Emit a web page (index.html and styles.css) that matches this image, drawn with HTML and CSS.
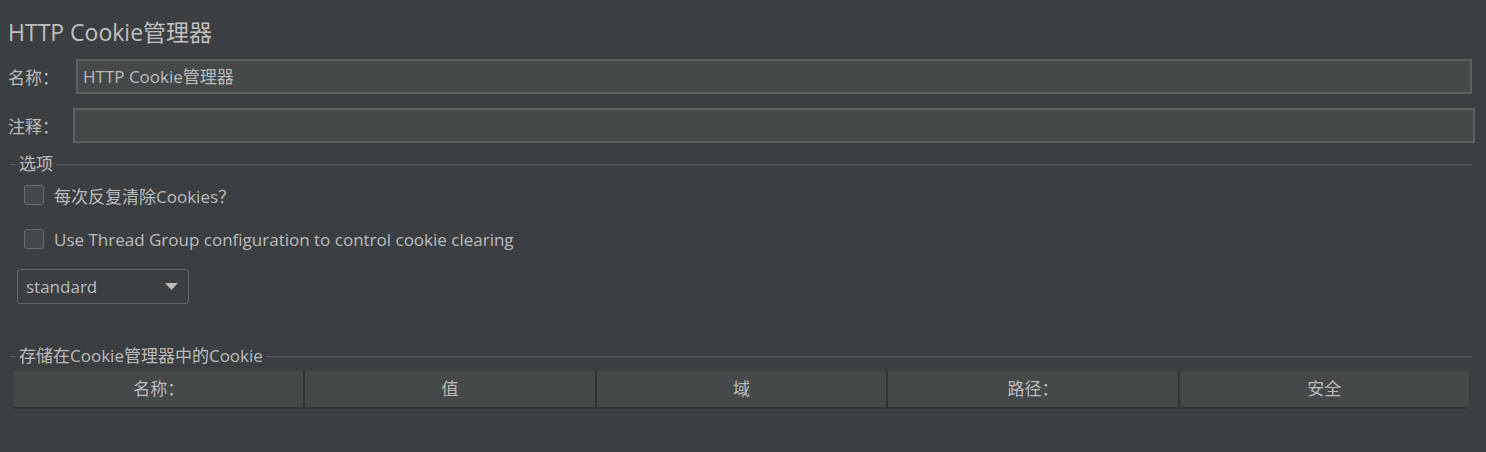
FILE: index.html
```html
<!DOCTYPE html>
<html lang="zh">
<head>
<meta charset="utf-8">
<title>HTTP Cookie管理器</title>
<link rel="stylesheet" href="styles.css">
</head>
<body>
<div class="panel">
  <div class="title">HTTP Cookie管理器</div>
  <div class="row row-name">
    <label class="label label-name">名称：</label>
    <div class="field">HTTP Cookie管理器</div>
  </div>
  <div class="row row-comment">
    <label class="label label-comment">注释：</label>
    <div class="field"></div>
  </div>

  <div class="group group-options">
    <div class="legend"><span class="dash"></span><span class="legend-text">选项</span><span class="rule"></span></div>
    <div class="check-row first"><span class="checkbox"></span><span class="check-text">每次反复清除Cookies？</span></div>
    <div class="check-row"><span class="checkbox"></span><span class="check-text">Use Thread Group configuration to control cookie clearing</span></div>
    <div class="combo"><span class="combo-text">standard</span><svg class="arrow" width="13" height="7" viewBox="0 0 13 7"><path d="M0 0H13L6.5 7Z" fill="#bbbbbb"/></svg></div>
  </div>

  <div class="group group-table">
    <div class="legend"><span class="dash"></span><span class="legend-text">存储在Cookie管理器中的Cookie</span><span class="rule"></span></div>
    <div class="table-head">
      <div class="th">名称：</div>
      <div class="th">值</div>
      <div class="th">域</div>
      <div class="th">路径：</div>
      <div class="th">安全</div>
    </div>
  </div>
</div>
</body>
</html>
```
FILE: styles.css
```css
* { box-sizing: border-box; }
html, body { margin: 0; padding: 0; }
body {
  width: 1486px;
  height: 452px;
  background: #3c3f41;
  color: #bbbbbb;
  font-family: "Open Sans", "Noto Sans CJK SC", sans-serif;
  font-size: 17px;
  overflow: hidden;
}
.panel {
  display: flex;
  flex-direction: column;
}
.title {
  margin: 18px 0 0 8px;
  font-size: 23px;
  line-height: 28px;
  height: 28px;
  color: #c0c0c0;
}
.row {
  display: flex;
  align-items: center;
  height: 35px;
}
.row-name { margin-top: 13px; padding-left: 8px; padding-right: 14px; }
.row-comment { margin-top: 14px; padding-left: 8px; padding-right: 11px; }
.label { font-size: 17px; }
.label-name { width: 68px; }
.label-comment { width: 65px; }
.field {
  flex: 1;
  height: 35px;
  background: #45494a;
  border: 2px solid #5e6162;
  padding-left: 5px;
  font-size: 17px;
  line-height: 31px;
}
.group { display: flex; flex-direction: column; }
.group-options { margin-top: 10px; padding-left: 10px; padding-right: 14px; }
.legend {
  display: flex;
  align-items: center;
  height: 22px;
  font-size: 17px;
  line-height: 22px;
}
.dash { width: 6px; height: 1px; background: #5a5c5e; }
.legend-text { padding: 0 3px; }
.rule { flex: 1; height: 1px; background: #5a5c5e; }
.check-row {
  display: flex;
  align-items: center;
  height: 30px;
  margin-top: 14px;
  padding-left: 14px;
}
.check-row.first { margin-top: 5px; }
.checkbox {
  width: 20px;
  height: 20px;
  border: 1px solid #6b6e70;
  border-radius: 3px;
  background: #43494a;
}
.check-text { margin-left: 10px; font-size: 17px; }
.combo {
  margin-top: 15px;
  margin-left: 7px;
  width: 172px;
  height: 35px;
  border: 1px solid #646769;
  border-radius: 3px;
  display: flex;
  align-items: center;
  justify-content: space-between;
  padding: 0 10px 0 8px;
  font-size: 17px;
}
.combo-text { line-height: 33px; }
.group-table { margin-top: 41px; padding-left: 10px; padding-right: 14px; }
.table-head {
  margin-top: 4px;
  margin-left: 4px;
  margin-right: 3px;
  display: grid;
  grid-template-columns: repeat(5, 1fr);
  column-gap: 2px;
  background: #313335;
  border-bottom: 2px solid #333537;
  height: 38px;
}
.th {
  background: #45494a;
  text-align: center;
  font-size: 17px;
  line-height: 36px;
}
```
